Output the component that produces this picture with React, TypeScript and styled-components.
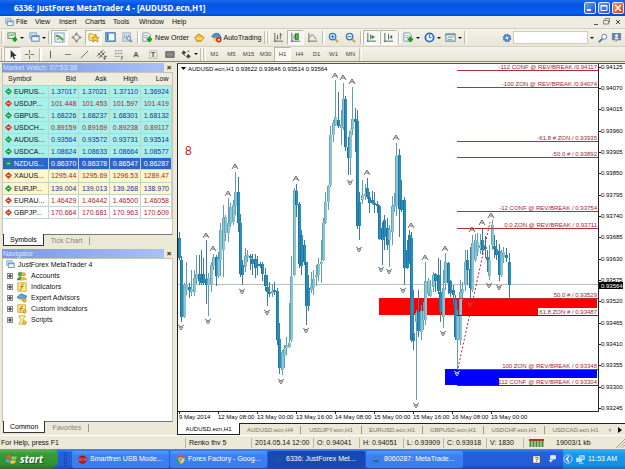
import React from "react";
import styled, { createGlobalStyle, css } from "styled-components";

const Global = createGlobalStyle`
  * { box-sizing: border-box; }
  body { margin: 0; background: #ece9d8; font: 7px/10px "Liberation Sans", Arial, sans-serif; color: #111; }
  button, input { font: inherit; color: inherit; padding: 0; margin: 0; border: 0; background: none; }
  svg { display: block; flex: none; }
`;

const Window = styled.div`
  display: flex;
  flex-direction: column;
  min-height: 100vh;
`;

const TitleBar = styled.header`
  display: flex;
  align-items: center;
  height: 16px;
  padding: 0 1px 0 14px;
  gap: 2px;
  background: linear-gradient(#1a6cf0, #0553dd 30%, #0560f4 80%, #0348c4);
`;

const Title = styled.h1`
  flex: 1;
  margin: 0;
  color: #fff;
  font: bold 8px/12px "Open Sans", sans-serif;
  white-space: nowrap;
`;

const Caption = styled.button<{ $close?: boolean }>`
  display: grid;
  place-items: center;
  width: 12px;
  height: 12px;
  border: 1px solid #dfe8ff;
  border-radius: 2px;
  background: ${(p) => (p.$close ? "linear-gradient(135deg, #f09070, #d83c14)" : "linear-gradient(135deg, #6f9cf4, #1c4fd4)")};
`;

const MenuBar = styled.nav`
  display: flex;
  align-items: center;
  height: 12px;
  padding: 0 3px;
  background: #efede0;
`;

const MenuItem = styled.button<{ $w: number }>`
  width: ${(p) => p.$w}px;
  text-align: left;
`;

const MdiButtons = styled.div`
  display: flex;
  gap: 3px;
  margin-left: auto;
`;

const ToolRow = styled.div<{ $h: number }>`
  display: flex;
  align-items: center;
  height: ${(p) => p.$h}px;
  padding-left: 1px;
  border-top: 1px solid #d4d0c0;
  background: linear-gradient(#f5f3ea, #e9e6d6);
`;

const Grip = styled.span`
  width: 3px;
  height: 13px;
  border-left: 1px solid #c5c1b0;
  border-right: 1px solid #fff;
`;

const Sep = styled.span`
  width: 4px;
  height: 13px;
  border-right: 2px solid #fff;
  background: #c2beac;
  background-clip: content-box;
  padding-left: 1px;
`;

const Tool = styled.button<{ $on?: boolean; $w?: number }>`
  display: flex;
  flex: none;
  align-items: center;
  justify-content: center;
  width: ${(p) => p.$w ?? 17}px;
  height: 15px;
  gap: 2px;
  white-space: nowrap;
  ${(p) => p.$on && css`
    background: #f8f7f2;
    border: 1px solid #b9b5a4;
    border-right-color: #fff;
    border-bottom-color: #fff;
  `}
`;

const Period = styled(Tool)`
  font-size: 6px;
  color: #444;
`;

const Caret = styled.span`
  border: 2px solid transparent;
  border-top-color: #111;
  border-bottom: 0;
`;

const SearchBox = styled.form`
  display: flex;
  align-items: center;
  height: 13px;
  margin: 0 2px 0 auto;
`;

const SearchInput = styled.input`
  width: 75px;
  height: 13px;
  background: #fff;
  border: 1px solid #d2cebf;
`;

const Work = styled.main`
  display: grid;
  flex: 1;
  grid-template-columns: 174px minmax(0, 1fr);
  gap: 3px;
  border-top: 1px solid #8a8778;
`;

const Side = styled.aside`
  display: flex;
  flex-direction: column;
  gap: 2px;
  padding: 1px 0 1px 2px;
`;

const Panel = styled.section<{ $grow?: boolean }>`
  display: flex;
  flex-direction: column;
  ${(p) => (p.$grow ? "flex: 1;" : "height: 184px;")}
`;

const PanelHead = styled.header`
  display: flex;
  height: 9px;
  align-items: center;
  justify-content: space-between;
`;

const PanelTitle = styled.h2`
  flex: 1;
  margin: 0;
  height: 9px;
  padding-left: 1px;
  font: 7px/9px "Liberation Sans", Arial, sans-serif;
  color: #dfe8ff;
  background: linear-gradient(90deg, #7a98e4, #a9c0f6);
`;

const PanelClose = styled.button`
  width: 10px;
  font: bold 8px/8px "Liberation Sans", Arial, sans-serif;
`;

const PanelBody = styled.div`
  flex: 1;
  margin-right: 1px;
  background: #fff;
  border: 1px solid #c9c5b4;
  border-bottom-color: #777;
`;

const Quotes = styled.table`
  width: 100%;
  height: 146px;
  table-layout: fixed;
  border-collapse: collapse;
`;

const HeadCell = styled.th<{ $first?: boolean }>`
  width: ${(p) => (p.$first ? "45px" : "auto")};
  height: 12px;
  padding: ${(p) => (p.$first ? "0 0 0 5px" : "0 3px 0 0")};
  text-align: ${(p) => (p.$first ? "left" : "right")};
  font-weight: normal;
  background: #efede0;
  border-bottom: 1px solid #d0ccba;
`;

const QuoteRow = styled.tr<{ $bg: string; $fg: string }>`
  background: ${(p) => p.$bg};
  color: ${(p) => p.$fg};
`;

const Cell = styled.td`
  padding: 0 2px 0 0;
  text-align: right;
  border: 1px solid #c6d2cc;
  border-left: 0;
  line-height: 9px;
`;

const SymbolCell = styled(Cell)<{ $light?: boolean }>`
  padding-left: 2px;
  text-align: left;
  color: ${(p) => (p.$light ? "#fff" : "#111")};
`;

const SymbolBox = styled.span`
  display: flex;
  align-items: center;
  gap: 2px;
`;

const PanelTabs = styled.div`
  display: flex;
  align-items: flex-start;
  height: 12px;
  padding-left: 1px;
`;

const PanelTab = styled.button<{ $on?: boolean }>`
  margin-top: 2px;
  padding: 0 7px;
  height: 8px;
  line-height: 8px;
  color: #8a877a;
  border-right: 1px solid #a09d8e;
  ${(p) => p.$on && css`
    padding: 0 6px;
    color: #000;
    background: #fff;
    border: 1px solid #333;
    border-top: 0;
    margin-top: -1px;
    height: 12px;
    line-height: 11px;
  `}
`;

const Tree = styled.ul`
  margin: 0;
  padding: 0 0 0 3px;
  list-style: none;
`;

const Branch = styled.li<{ $root?: boolean }>`
  display: flex;
  align-items: center;
  height: 11px;
  gap: ${(p) => (p.$root ? 3 : 4)}px;
  padding-left: ${(p) => (p.$root ? 0 : 1)}px;
`;

const Expand = styled.button`
  display: grid;
  place-items: center;
  width: 6px;
  height: 6px;
  border: 1px solid #888;
  background: #fff;
`;

const ChartPane = styled.section`
  display: flex;
  flex-direction: column;
  padding-top: 1px;
`;

const ChartFrame = styled.div`
  flex: 1;
  min-height: 0;
  background: #fff;
  border-top: 1px solid #555;
  border-left: 1px solid #222;
`;

const ChartSvg = styled.svg`
  width: 100%;
  height: 100%;
  font-family: "Liberation Sans", Arial, sans-serif;
  font-size: 6px;
`;

const ChartTabs = styled.div`
  display: flex;
  align-items: center;
  height: 12px;
  border-top: 1px solid #222;
`;

const ChartTab = styled.button<{ $on?: boolean }>`
  width: 61px;
  height: 8px;
  font-size: 6px;
  line-height: 8px;
  white-space: nowrap;
  color: #757264;
  border-right: 1px solid #a09d8e;
  ${(p) => p.$on && css`
    width: 63px;
    height: 12px;
    margin-top: -1px;
    line-height: 10px;
    color: #000;
    background: #fff;
    border: 1px solid #222;
    border-top: 0;
  `}
  &:last-of-type { border-right: 0; }
`;

const TabArrows = styled.div`
  display: flex;
  gap: 6px;
  margin-left: auto;
  padding-right: 3px;
`;

const StatusBar = styled.footer`
  display: flex;
  align-items: center;
  height: 14px;
  padding-left: 1px;
  border-top: 1px solid #fff;
`;

const Status = styled.span<{ $w?: number }>`
  ${(p) => (p.$w ? `width: ${p.$w}px;` : "flex: 1;")}
  height: 10px;
  padding-left: 3px;
  white-space: nowrap;
  border-left: 1px solid #bbb7a6;
  &:first-child { border: 0; padding: 0; }
`;

const TrafficStatus = styled(Status)`
  display: flex;
  align-items: center;
  gap: 12px;
  padding-left: 5px;
`;

const TaskBar = styled.footer`
  display: flex;
  align-items: center;
  height: 20px;
  gap: 1px;
  background: linear-gradient(#3f8cf3, #2460dc 18%, #235cda 80%, #1b48b8);
`;

const Start = styled.button`
  display: flex;
  align-items: center;
  gap: 2px;
  width: 58px;
  height: 20px;
  padding-left: 6px;
  border-radius: 0 6px 8px 0;
  background: linear-gradient(#5fb55a, #399a38 25%, #358f35 75%, #277327);
  color: #fff;
  font: italic bold 10px/16px "Open Sans", sans-serif;
  text-shadow: 1px 1px 1px #1c501c;
`;

const Dots = styled.span`
  width: 3px;
  height: 13px;
  margin: 0 4px 0 5px;
  border-left: 1px dotted #123a94;
  border-right: 1px dotted #123a94;
`;

const Task = styled.button<{ $on?: boolean }>`
  display: flex;
  align-items: center;
  flex: 0 1 97px;
  min-width: 0;
  height: 17px;
  gap: 3px;
  padding-left: 6px;
  color: #fff;
  white-space: nowrap;
  border-radius: 2px;
  background: ${(p) => (p.$on ? "#1a48b2" : "linear-gradient(#5a9bfa, #3c80f2 25%, #3a7cee)")};
`;

const Tray = styled.div`
  display: flex;
  align-items: center;
  gap: 7px;
  margin-left: auto;
`;

const Clock = styled.div`
  display: flex;
  align-items: center;
  gap: 3px;
  width: 62px;
  height: 20px;
  color: #fff;
  background: linear-gradient(#3bb4f6, #149bea 25%, #1290e4 80%, #0d70c4);
`;

const ICONS: Record<string, React.ReactNode> = {
  newChart: <><rect x="1" y="1" width="8" height="6" fill="#e9f4e4" stroke="#55885a" /><path d="M2 5l2-2 2 1 2-2" stroke="#2d8a38" fill="none" /><path d="M6 8h5M8.500 5.500v5" stroke="#18a022" strokeWidth="2.500" /></>,
  windows: <><rect x="1" y="1" width="7" height="6" fill="#dceafa" stroke="#6f98c4" /><rect x="3" y="4" width="8" height="6" fill="#eef5fd" stroke="#5580b4" /><path d="M3 5h8" stroke="#5580b4" /></>,
  market: <><rect x="1" y="1" width="10" height="10" fill="#e6f1f7" stroke="#7fa6bc" /><path d="M2 4l4 1 4 4" stroke="#4a9a52" strokeWidth="2" fill="none" /><path d="M3 8l3-1" stroke="#e2ad35" strokeWidth="2" /></>,
  target: <><path d="M6 0l2 3H4zM6 12l2-3H4zM0 6l3-2v4zM12 6L9 4v4z" fill="#858585" /><circle cx="6" cy="6" r="3" fill="none" stroke="#8a8a8a" /></>,
  favorites: <><path d="M1 2h4l1 1h3v6H1z" fill="#ffe593" stroke="#c89b28" /><path d="M8 3l1 3h3l-2 2 1 3-3-2-3 2 1-3-2-2h3z" fill="#ffd23e" stroke="#bf8e1b" /></>,
  terminal: <><rect x="1" y="1" width="10" height="9" fill="#fff" stroke="#3d78bb" strokeWidth="1.500" /><path d="M3 2v7" stroke="#3d78bb" strokeWidth="2" /></>,
  tester: <><rect x="1" y="1" width="8" height="9" fill="#e4edf8" stroke="#8ba6c5" /><path d="M3 3v5M5 3v5M7 3v3" stroke="#7f9ab8" /><circle cx="7.500" cy="7" r="2" fill="#eef" stroke="#5c7da4" /><path d="M9 9l2 2" stroke="#5c7da4" strokeWidth="1.500" /></>,
  order: <><path d="M1 1h6l2 2v7H1z" fill="#f8fbff" stroke="#7d99ad" /><path d="M2 4h5M2 6h4" stroke="#9ab" /><path d="M5 8h6M8 5v6" stroke="#18a022" strokeWidth="2.500" /></>,
  gold: <><path d="M1 6l4-4 6 4-3 4H3z" fill="#f5c23e" stroke="#b9811a" /><path d="M2 7l6 1 2-2" stroke="#fff0a5" fill="none" /></>,
  auto: <><path d="M1 5c1-4 8-5 9-1l1 2H2z" fill="#4a95cf" stroke="#2d6da3" /><path d="M2 6h7v4H4z" fill="#f0c352" /><circle cx="8.500" cy="8.500" r="3" fill="#d6301f" /><rect x="7.500" y="7.500" width="2" height="2" fill="#fff" /></>,
  bars: <><path d="M2 1v10M1 10h10M5 3v5M8 1v7M8 3h2M4 7h1" stroke="#4d6559" fill="none" /></>,
  candles: <><path d="M2 1v10M1 10h10M4.500 3v5" stroke="#4d6559" fill="none" /><rect x="6" y="2" width="3" height="6" fill="#49c44f" stroke="#1b7e24" /></>,
  line: <path d="M2 1v10M1 10h10M3 6c2-5 4-3 7 2" stroke="#5d756b" fill="none" />,
  zoomIn: <><path d="M8 8l3 3" stroke="#c4a04a" strokeWidth="2" /><circle cx="5" cy="5" r="3.500" fill="#e5f3ff" stroke="#347fc4" strokeWidth="1.500" /><path d="M3 5h4M5 3v4" stroke="#2672be" /></>,
  zoomOut: <><path d="M8 8l3 3" stroke="#c4a04a" strokeWidth="2" /><circle cx="5" cy="5" r="3.500" fill="#e5f3ff" stroke="#347fc4" strokeWidth="1.500" /><path d="M3 5h4" stroke="#2672be" /></>,
  scroll: <><path d="M2 1v10M1 10h10M5 3v5" stroke="#4d6559" fill="none" /><path d="M6 3l4 2.500L6 8z" fill="#3d8f5f" /></>,
  shift: <><path d="M2 1v10M1 10h10M6 2v6" stroke="#4d6559" fill="none" /><path d="M10 3L7 5.500 10 8z" fill="#3a79a5" /></>,
  clock: <><circle cx="6" cy="6" r="4.500" fill="#f4faff" stroke="#2f6fbd" strokeWidth="2" /><path d="M6 3v3h2" stroke="#2f5580" fill="none" /></>,
  template: <><rect x="1" y="2" width="10" height="8" fill="#eef6f6" stroke="#527f92" /><path d="M1 3h10M3 7l2-2 2 1 2-1M3 8.500h5" stroke="#4f8b78" fill="none" /></>,
  gear: <><circle cx="6" cy="6" r="4" fill="#7ba4dc" stroke="#3466ac" strokeWidth="2" strokeDasharray="2 1" /><circle cx="6" cy="6" r="3.500" fill="#5d8ed2" /><circle cx="6" cy="6" r="1.500" fill="#e9f1fc" /></>,
  find: <><path d="M5 7l-4 4" stroke="#4c6fae" strokeWidth="2" /><circle cx="7.500" cy="4.500" r="3" fill="#fff" stroke="#4c6fae" /></>,
  chat: <><path d="M1 1h10v8H7l-2 2V9H1z" fill="#6b82ac" /><path d="M4 8c0-2 1-2 2-2s2 0 2 2z" fill="#fff" /><circle cx="6" cy="4" r="1.500" fill="#fff" /></>,
  cursor: <path d="M4 1v9l2-2 1.500 3.500 1.500-.6L7.500 7.500h3z" fill="#333" />,
  cross: <path d="M6 1v4M6 7v4M1 6h4M7 6h4" stroke="#666" />,
  vline: <path d="M6 2v8" stroke="#555" />,
  hline: <path d="M3 6h7" stroke="#777" />,
  trend: <path d="M2 10l8-8" stroke="#666" />,
  channel: <path d="M1 8l7-7M3 10l7-7M2 4l5 5M5 2l4 5M9 8h3M9 10h2M9 8v4" stroke="#555" fill="none" />,
  fibo: <path d="M2 2h8M2 5h8M2 8h6M9 8h3M9 10h2M9 8v4" stroke="#777" fill="none" strokeDasharray="2 1" />,
  rect: <rect x="2" y="3" width="9" height="6" fill="#8a8a8a" stroke="#555" />,
  label: <rect x="2" y="2" width="9" height="9" fill="none" stroke="#888" strokeDasharray="1 1" />,
  arrows: <path d="M1 4l2-2 2 2-2 2zM6 8l2-2 2 2-2 2zM3 6l2 2M7 3l2-1" fill="#444" stroke="#444" />,
  accounts: <><circle cx="4" cy="4" r="3" fill="#58a94a" /><path d="M0 11c0-5 7-5 7 0z" fill="#3f9140" /><circle cx="8" cy="4" r="2.500" fill="#e2a552" /><path d="M4 11c0-5 8-5 8 0z" fill="#e9b938" /></>,
  indicator: <><rect x="1" y="1" width="10" height="10" fill="#ffe892" stroke="#d1a02d" /><path d="M8 3c-2-1-2 0-2.500 3S5 10 3 9M4 5.500h4" stroke="#996c10" fill="none" /></>,
  custom: <><rect x="1" y="1" width="9" height="9" fill="#ffe892" stroke="#d1a02d" /><path d="M7 3c-2-1-2 0-2.500 3S4 9 3 8M3 5.500h4" stroke="#996c10" fill="none" /><circle cx="9" cy="9" r="2" fill="#f3c93f" stroke="#b18a20" /></>,
  expert: <><path d="M0 5l5-4 7 3-2 3H3z" fill="#5aa9d6" stroke="#2b78a8" /><path d="M3 7h5v3H5z" fill="#efc870" /><circle cx="9" cy="9" r="2" fill="#f3c93f" stroke="#b18a20" /></>,
  script: <><path d="M2 1h8l-3 5 3 5H2l3-5z" fill="#fff0a8" stroke="#d0a530" /><circle cx="9" cy="9" r="2" fill="#f3c93f" stroke="#b18a20" /></>,
  modem: <><circle cx="6" cy="6" r="5.500" fill="#b51515" /><path d="M2 5h8v2H2z" fill="#fff" /><path d="M3 6h6" stroke="#400" /></>,
  chrome: <><circle cx="6" cy="6" r="5.500" fill="#f4c531" /><path d="M6 6L1.200 3.200A5.500 5.500 0 0 1 11 3.500z" fill="#db4437" /><path d="M6 6L1.200 3.200A5.500 5.500 0 0 0 5.500 11.500z" fill="#149b56" /><circle cx="6" cy="6" r="2.500" fill="#4285f4" stroke="#fff" /></>,
  meta: <><path d="M1 8c0-4 3-5 5-6 2 2 5 2 5 6-3 3-7 3-10 0z" fill="#2f66b0" /><path d="M2 6l4-2 4 3" stroke="#9cd0e8" fill="none" /></>,
  metaDark: <path d="M1 8c0-4 3-5 5-6 2 2 5 2 5 6-3 3-7 3-10 0z" fill="#1c4fae" />,
  flag: <><path d="M1 3c2-1 3-1 4 0L4 6C3 5 2 5 0 6z" fill="#f1592a" /><path d="M6 3c2 1 3 1 5 0l-1 3c-2 1-3 1-5 0z" fill="#8fd14a" /><path d="M0 7c2-1 3-1 4 0l-1 3c-1-1-2-1-4 0z" fill="#5aa2ee" /><path d="M5 7c2 1 3 1 5 0L9 10c-2 1-3 1-5 0z" fill="#fccb3b" /></>,
  help: <rect x="1" y="1" width="10" height="10" rx="1" fill="#fffde8" stroke="#333" />,
  chevron: <><circle cx="6" cy="6" r="5" fill="#2f86f0" stroke="#c8e4ff" /><path d="M7 3L4 6l3 3" stroke="#fff" fill="none" strokeWidth="1.500" /></>,
  network: <><rect x="1" y="4" width="6" height="5" fill="#b5dafa" stroke="#d9efff" /><rect x="5" y="1" width="6" height="5" fill="#7fb5ea" stroke="#d9efff" /><path d="M4 11h6" stroke="#d9efff" /></>,
  restore: <><rect x="3" y="1" width="7" height="5" fill="none" stroke="#555" /><rect x="1" y="4" width="7" height="5" fill="#efede0" stroke="#555" /></>,
  trayWindow: <><rect x="4" y="1" width="7" height="5" fill="#dcebff" stroke="#fff" /><path d="M2 8h5M4 8v3" stroke="#fff" strokeWidth="2" /></>,
};

function Icon({ name, size = 11, glyph }: { name: string; size?: number; glyph?: string }) {
  return (
    <svg width={size} height={size} viewBox="0 0 12 12" aria-hidden="true">
      {ICONS[name]}
      {glyph && <text x="6" y="9" textAnchor="middle" fontSize="9" fontWeight="bold" fill="#555">{glyph}</text>}
    </svg>
  );
}

const IconTool = ({ name, label, on }: { name: string; label: string; on?: boolean }) => (
  <Tool $on={on} aria-label={label}><Icon name={name} /></Tool>
);
const DropTool = ({ name, label, w = 22 }: { name: string; label: string; w?: number }) => (
  <Tool $w={w} aria-label={label}><Icon name={name} /><Caret /></Tool>
);

const QUOTES: [string, boolean, string, string, string, string, string][] = [
  ["EURUS...", true, "blue", "1.37017", "1.37021", "1.37110", "1.36924"],
  ["USDJP...", false, "red", "101.448", "101.453", "101.597", "101.419"],
  ["GBPUS...", true, "blue", "1.68226", "1.68237", "1.68301", "1.68132"],
  ["USDCH...", false, "red", "0.89159", "0.89169", "0.89238", "0.89117"],
  ["AUDUS...", true, "blue", "0.93564", "0.93572", "0.93731", "0.93514"],
  ["USDCA...", true, "blue", "1.08624", "1.08633", "1.08664", "1.08577"],
  ["NZDUS...", true, "sel", "0.86370", "0.86378", "0.86547", "0.86287"],
  ["XAUUS...", false, "red", "1295.44", "1295.69", "1296.53", "1289.47"],
  ["EURJP...", true, "blue", "139.004", "139.013", "139.268", "138.970"],
  ["EURAU...", false, "red", "1.46429", "1.46442", "1.46500", "1.46058"],
  ["GBPJP...", false, "red", "170.664", "170.681", "170.963", "170.609"],
];
const rowBg = (i: number) => (i === 6 ? "#2f66c4" : i < 6 ? "#a9f0ec" : i < 9 ? "#fdf8cc" : "#fff");
const rowFg: Record<string, string> = { blue: "#15309c", red: "#a8242c", sel: "#fff" };

// x, high, body top, body bottom, low
const CANDLES: number[][] = [
  [179,232,238,258,260],[181,256,260,317,322],[184,283,285,317,318],[186,262,285,290,295],[189,283,287,290,298],[191,270,289,292,296],[194,270,278,292,296],[196,255,274,279,284],[199,255,274,281,285],[201,250,278,283,285],[203,258,274,283,285],[206,240,279,285,304],[208,273,278,285,316],[211,262,265,285,292],[213,254,257,266,270],[216,255,257,276,286],[218,252,259,276,278],[220,223,230,260,276],[223,205,218,250,277],[225,215,217,233,241],[228,198,223,233,242],[230,203,207,224,227],[233,200,205,222,225],[235,172,192,206,215],[238,177,192,223,232],[240,214,223,274,277],[242,260,265,275,285],[245,248,256,267,272],[247,250,255,257,262],[250,254,256,258,270],[252,254,259,264,275],[255,254,259,268,278],[257,256,264,266,275],[260,262,264,266,268],[262,262,264,274,281],[265,268,275,286,291],[267,275,287,292,306],[269,282,292,294,297],[272,284,291,293,297],[274,282,290,292,295],[277,288,291,340,345],[279,323,339,368,374],[282,350,352,370,375],[284,345,349,356,368],[286,337,345,348,355],[289,303,343,347,348],[291,256,276,340,342],[294,188,190,275,276],[296,184,191,205,217],[299,202,204,264,268],[301,230,235,266,275],[304,240,245,262,265],[306,262,262,306,325],[308,275,288,306,311],[311,272,286,290,293],[313,270,279,288,295],[316,265,275,277,286],[318,258,264,275,281],[321,240,262,264,283],[323,218,223,260,261],[325,192,202,223,224],[328,185,186,202,210],[330,126,135,185,187],[333,120,123,135,142],[335,80,117,125,126],[338,92,120,126,128],[341,110,125,128,145],[343,83,99,127,130],[345,96,99,147,151],[348,137,147,158,175],[350,130,131,158,175],[352,87,119,130,135],[355,108,119,122,152],[357,110,121,226,229],[359,192,202,226,240],[362,180,195,200,204],[365,184,194,196,200],[367,178,188,197,199],[369,192,197,203,213],[372,191,200,203,204],[374,192,203,205,213],[377,201,204,206,213],[379,205,206,239,240],[382,222,228,240,265],[384,215,220,237,250],[387,218,228,245,250],[389,225,230,240,267],[392,196,206,232,245],[394,193,205,207,212],[396,143,156,206,216],[399,149,155,209,237],[401,180,200,210,212],[404,197,200,268,285],[407,240,250,268,269],[409,230,235,262,264],[411,232,238,340,342],[413,290,333,341,350],[416,310,313,322,400],[418,290,312,331,337],[421,305,311,332,340],[423,302,311,320,330],[425,262,281,320,325],[428,278,281,294,296],[430,280,289,296,297],[433,272,275,287,292],[435,273,274,281,292],[438,258,275,291,294],[440,260,292,312,322],[443,270,288,317,328],[445,253,262,283,290],[448,262,263,283,294],[450,280,281,293,297],[453,285,290,295,305],[455,295,300,337,340],[457,310,316,340,370],[460,280,292,340,345],[462,282,289,293,300],[465,250,262,285,291],[467,250,260,270,285],[470,247,269,288,298],[472,235,243,290,292],[475,234,240,260,262],[477,233,242,252,256],[480,234,245,248,254],[482,228,240,250,255],[485,236,247,249,258],[487,250,257,260,272],[489,245,260,276,280],[492,220,225,245,250],[494,235,246,249,258],[496,240,249,255,260],[499,244,251,275,281],[501,250,252,275,277],[503,247,252,257,263],[506,248,255,258,262],[509,253,262,285,298],
];
const UP = [[206,235],[213,248],[228,193],[235,166],[296,178],[335,75],[343,77],[352,81],[367,172],[396,137],[411,225],[425,257],[445,248],[472,229],[482,222],[491,215]];
const DOWN = [[181,327],[208,321],[242,291],[267,312],[281,381],[306,330],[350,182],[359,249],[381,269],[389,271],[403,290],[416,405],[443,333],[457,373],[470,304],[489,285],[499,287]];
const LEVELS: [number, string][] = [
  [70, "-112 CONF @ REV/BREAK /0.94117"], [87, "-100 ZON @ REV/BREAK /0.94074"], [141, "-61.8 # ZON / 0.93935"], [157, "-50.0 # / 0.93892"],
  [211, "-12 CONF @ REV/BREAK / 0.93754"], [228, "0.0 ZON @ REV/BREAK / 0.93711"], [298, "50.0 # / 0.93529"], [369, "100 ZON @  REV/BREAK / 0.93348"],
];
const BOXED: [number, number, string][] = [[315, 538, "61.8 ZON # / 0.93487"], [385, 499, "112 CONF @ REV/BREAK / 0.93304"]];
const PRICES = ["0.94125","0.94070","0.94015","0.93960","0.93905","0.93850","0.93795","0.93740","0.93685","0.93630","0.93575","0.93520","0.93465","0.93410","0.93355","0.93300","0.93245"];
const DATES = ["9 May 2014","12 May 08:00","13 May 00:00","13 May 16:00","14 May 08:00","15 May 00:00","15 May 16:00","16 May 08:00","19 May 00:00"];

function Chart() {
  return (
    <ChartSvg viewBox="178 64 447 358" preserveAspectRatio="xMinYMin meet" role="img" aria-label="AUDUSD H1 price chart">
      <path d="M178 284.500h420" stroke="#b8c0c4" />
      <rect x="379" y="298" width="218" height="17" fill="#f00" />
      <rect x="445" y="369" width="152" height="16" fill="#00f" />
      {CANDLES.map(([x, h, t, b, l], i) => {
        const prev = CANDLES[Math.max(0, i - 1)];
        const next = CANDLES[Math.min(CANDLES.length - 1, i + 1)];
        const falling = next[2] + next[3] > prev[2] + prev[3];
        return (
          <g key={x}>
            <path d={`M${x + 0.5} ${h}V${l}`} stroke={falling ? "#3b7c99" : "#5f9fb1"} />
            <rect x={x - 1} y={t} width="3" height={b - t} fill={falling ? "#2c8cba" : "#8ec5d2"} />
            <path d={`M${x - 0.5} ${t}V${b}`} stroke={falling ? "#1a74a5" : "#5fa8bd"} />
          </g>
        );
      })}
      {UP.map(([x, y]) => <path key={`${x}-${y}`} d={`M${x - 3} ${y + 3}L${x} ${y - 2}l3 5M${x - 1} ${y + 1}h3`} stroke="#666" fill="none" />)}
      {DOWN.map(([x, y]) => <path key={`${x}-${y}`} d={`M${x - 3} ${y - 2}l3 2 3-2M${x - 2} ${y}h4l-2 3z`} stroke={y === 304 ? "#b44" : y === 373 ? "#ccd" : "#777"} fill="none" />)}
      <path d="M458 368L490 222" stroke="#a02a34" strokeDasharray="2 2" />
      {LEVELS.map(([y, label]) => (
        <g key={y}>
          <path d={`M457 ${y + 0.5}h141`} stroke="#b03040" />
          <text x="597" y={y - 1} textAnchor="end" fill="#a81c28">{label}</text>
        </g>
      ))}
      {BOXED.map(([y, x, label]) => (
        <g key={y}>
          <path d={`M457 ${y + 0.5}h141`} stroke="#8c1020" />
          <rect x={x} y={y - 7} width={597 - x} height="7" fill="#fff" />
          <text x="597" y={y - 1} textAnchor="end" fill="#a81c28">{label}</text>
        </g>
      ))}
      <path d="M598.500 64V411.500H178" stroke="#222" fill="none" />
      {PRICES.map((p, i) => {
        const y = 67 + Math.floor(i * 21.35);
        return <g key={p}><path d={`M599 ${y}.5h2`} stroke="#222" /><text x="601" y={y + 2}>{p}</text></g>;
      })}
      <rect x="599" y="282" width="24" height="7" fill="#000" />
      <text x="601" y="288" fill="#fff">0.93564</text>
      {DATES.map((d, i) => (
        <g key={d}><path d={`M${179 + i * 39}.5 411v3`} stroke="#222" /><text x={179 + i * 39} y="419">{d}</text></g>
      ))}
      <path d="M181 67h5l-2.500 3z" />
      <text x="188" y="71">AUDUSD.ecn,H1  0.93622 0.93646 0.93514 0.93564</text>
      <text x="185" y="155" fontSize="12" fill="#c41818">8</text>
    </ChartSvg>
  );
}

function MarketWatch() {
  return (
    <Panel>
      <PanelHead><PanelTitle>Market Watch: 07:53:38</PanelTitle><PanelClose aria-label="Close Market Watch">×</PanelClose></PanelHead>
      <PanelBody>
        <Quotes>
          <thead>
            <tr><HeadCell $first>Symbol</HeadCell>{["Bid", "Ask", "High", "Low"].map((h) => <HeadCell key={h}>{h}</HeadCell>)}</tr>
          </thead>
          <tbody>
            {QUOTES.map(([sym, up, tone, ...vals], i) => (
              <QuoteRow key={sym} $bg={rowBg(i)} $fg={rowFg[tone]}>
                <SymbolCell $light={tone === "sel"}>
                  <SymbolBox>
                    <svg width="7" height="7" viewBox="0 0 7 7" aria-hidden="true"><path d="M3.500 0L7 3.500 3.500 7 0 3.500z" fill={up ? "#1f9c46" : "#d2402a"} /><path d="M2 3.500h3" stroke={up ? "#9be8a8" : "#ffc0a8"} /></svg>
                    {sym}
                  </SymbolBox>
                </SymbolCell>
                {vals.map((v) => <Cell key={v}>{v}</Cell>)}
              </QuoteRow>
            ))}
          </tbody>
        </Quotes>
      </PanelBody>
      <PanelTabs><PanelTab $on>Symbols</PanelTab><PanelTab>Tick Chart</PanelTab></PanelTabs>
    </Panel>
  );
}

function Navigator() {
  const items = [["accounts", "Accounts"], ["indicator", "Indicators"], ["expert", "Expert Advisors"], ["custom", "Custom Indicators"], ["script", "Scripts"]];
  return (
    <Panel $grow>
      <PanelHead><PanelTitle>Navigator</PanelTitle><PanelClose aria-label="Close Navigator">×</PanelClose></PanelHead>
      <PanelBody>
        <Tree>
          <Branch $root><Icon name="windows" size={9} />JustForex MetaTrader 4</Branch>
          {items.map(([icon, label]) => (
            <Branch key={label}>
              <Expand aria-label={`Expand ${label}`}><svg width="4" height="4" viewBox="0 0 4 4"><path d="M0 2h4M2 0v4" stroke="#222" /></svg></Expand>
              <Icon name={icon} size={10} />{label}
            </Branch>
          ))}
        </Tree>
      </PanelBody>
      <PanelTabs><PanelTab $on>Common</PanelTab><PanelTab>Favorites</PanelTab></PanelTabs>
    </Panel>
  );
}

const MENU: [string, number][] = [["File", 19], ["View", 24], ["Insert", 26], ["Charts", 28], ["Tools", 26], ["Window", 33], ["Help", 24]];
const DRAWING = [["vline", "Vertical line"], ["hline", "Horizontal line"], ["trend", "Trendline"], ["channel", "Channel"], ["fibo", "Fibonacci"]];
const PERIODS = ["M1", "M5", "M15", "M30", "H1", "H4", "D1", "W1", "MN"];
const CHARTS = ["AUDUSD.ecn,H1", "AUDUSD.ecn,H4", "USDJPY.ecn,H1", "EURUSD.ecn,H1", "GBPUSD.ecn,H1", "USDCHF.ecn,H1", "USDCAD.ecn,H1"];
const STATUS: [string, number][] = [["Renko thv 5", 66], ["2014.05.14 12:00", 62], ["O: 0.94041", 46], ["H: 0.94051", 44], ["L: 0.93909", 40], ["C: 0.93918", 43], ["V: 1830", 37]];

export default function App() {
  return (
    <Window>
      <Global />
      <TitleBar>
        <Title>6336: JustForex MetaTrader 4 - [AUDUSD.ecn,H1]</Title>
        <Caption aria-label="Minimize"><svg width="8" height="8"><path d="M1 6h4" stroke="#fff" strokeWidth="2" /></svg></Caption>
        <Caption aria-label="Maximize"><svg width="8" height="8"><path d="M1 1.500h6v5H1zM1 2h6" stroke="#fff" fill="none" /></svg></Caption>
        <Caption $close aria-label="Close"><svg width="8" height="8"><path d="M1 1l6 6M7 1L1 7" stroke="#fff" strokeWidth="1.500" /></svg></Caption>
      </TitleBar>
      <MenuBar>
        <Tool $w={13} aria-label="Chart window menu"><Icon name="windows" size={9} /></Tool>
        {MENU.map(([m, w]) => <MenuItem key={m} $w={w}>{m}</MenuItem>)}
        <MdiButtons>
          <button aria-label="Minimize chart"><svg width="8" height="8"><path d="M2 6.500h4" stroke="#555" /></svg></button>
          <button aria-label="Restore chart"><Icon name="restore" size={8} /></button>
          <button aria-label="Close chart"><svg width="8" height="8"><path d="M2 2l4 4M6 2L2 6" stroke="#444" /></svg></button>
        </MdiButtons>
      </MenuBar>
      <ToolRow $h={18}>
        <Grip />
        <DropTool name="newChart" label="New chart" />
        <DropTool name="windows" label="Profiles" />
        <Grip />
        <IconTool name="market" label="Market Watch" on />
        <IconTool name="target" label="Data Window" />
        <IconTool name="favorites" label="Navigator" on />
        <IconTool name="terminal" label="Terminal" />
        <IconTool name="tester" label="Strategy Tester" />
        <Sep />
        <Tool $w={51}><Icon name="order" />New Order</Tool>
        <IconTool name="gold" label="MetaEditor" />
        <Tool $w={56}><Icon name="auto" />AutoTrading</Tool>
        <Grip /><Grip />
        <IconTool name="bars" label="Bar chart" />
        <IconTool name="candles" label="Candlesticks" on />
        <IconTool name="line" label="Line chart" />
        <Sep />
        <IconTool name="zoomIn" label="Zoom in" />
        <IconTool name="zoomOut" label="Zoom out" />
        <Sep />
        <IconTool name="scroll" label="Auto scroll" on />
        <IconTool name="shift" label="Chart shift" on />
        <Sep />
        <DropTool name="order" label="Indicators" w={21} />
        <DropTool name="clock" label="Periods" w={21} />
        <DropTool name="template" label="Templates" w={21} />
        <Grip />
        <SearchBox>
          <Tool $w={12} type="button" aria-label="Search options"><Icon name="gear" size={10} /></Tool>
          <SearchInput aria-label="Search" />
          <Tool $w={8} type="button" aria-label="Search history"><Caret /></Tool>
          <Tool $w={13} aria-label="Find"><Icon name="find" size={10} /></Tool>
          <Tool $w={14} type="button" aria-label="Community"><Icon name="chat" size={11} /></Tool>
        </SearchBox>
      </ToolRow>
      <ToolRow $h={15}>
        <Grip />
        <IconTool name="cursor" label="Cursor" on />
        <IconTool name="cross" label="Crosshair" />
        <Sep />
        {DRAWING.map(([n, l]) => <IconTool key={n} name={n} label={l} />)}
        <Tool aria-label="Text"><Icon name="" glyph="A" size={10} /></Tool>
        <Tool aria-label="Text label"><Icon name="label" glyph="T" size={10} /></Tool>
        <IconTool name="rect" label="Rectangle" />
        <DropTool name="arrows" label="Arrows" />
        <Grip /><Grip />
        {PERIODS.map((p) => <Period key={p} $on={p === "H1"}>{p}</Period>)}
        <Grip />
      </ToolRow>
      <Work>
        <Side><MarketWatch /><Navigator /></Side>
        <ChartPane>
          <ChartFrame><Chart /></ChartFrame>
          <ChartTabs>
            {CHARTS.map((c, i) => <ChartTab key={c} $on={i === 0}>{c}</ChartTab>)}
            <TabArrows>
              <button aria-label="Previous tabs"><svg width="4" height="6"><path d="M3 1v4L0 3z" fill="#aaa" /></svg></button>
              <button aria-label="Next tabs"><svg width="4" height="6"><path d="M0 0v6l4-3z" /></svg></button>
            </TabArrows>
          </ChartTabs>
        </ChartPane>
      </Work>
      <StatusBar>
        <Status $w={184}>For Help, press F1</Status>
        {STATUS.map(([s, w]) => <Status key={s} $w={w}>{s}</Status>)}
        <TrafficStatus>
          <svg width="15" height="8" aria-hidden="true"><path d="M1.500 0v8M4.500 1v7M7.500 2v6M10.500 0v8M13.500 1v7" stroke="#4b8a35" strokeWidth="2" /><path d="M0 1h15" stroke="#a43a25" strokeWidth="2" /></svg>
          19003/1 kb
        </TrafficStatus>
        <svg width="10" height="10" aria-hidden="true"><path d="M1 10L10 1M4 10l6-6M7 10l3-3" stroke="#aaa695" /></svg>
      </StatusBar>
      <TaskBar>
        <Start><Icon name="flag" size={12} />start</Start>
        <Dots />
        <Task><Icon name="modem" size={9} />Smartfren USB Mode...</Task>
        <Task><Icon name="chrome" size={9} />Forex Factory - Goog...</Task>
        <Task $on><Icon name="metaDark" size={9} />6336: JustForex Met...</Task>
        <Task><Icon name="meta" size={9} />8060287: MetaTrade...</Task>
        <Tray>
          <Icon name="help" size={9} glyph="?" />
          <Icon name="trayWindow" size={8} />
          <Clock><Icon name="chevron" size={10} /><Icon name="network" size={9} />11:53 AM</Clock>
        </Tray>
      </TaskBar>
    </Window>
  );
}
